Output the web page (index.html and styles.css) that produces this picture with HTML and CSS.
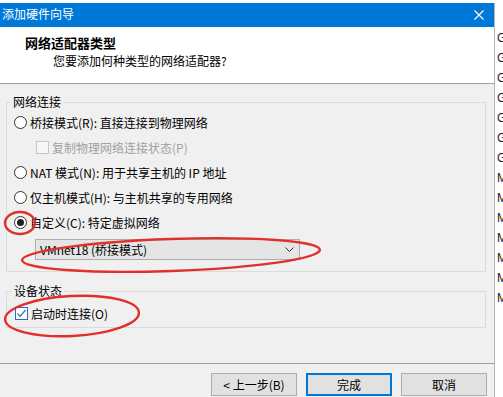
FILE: index.html
```html
<!doctype html>
<html lang="zh-CN">
<head>
  <meta charset="UTF-8">
  <title>添加硬件向导</title>
  <link rel="stylesheet" href="styles.css">
</head>
<body>
  <div class="screen">
    <div class="dialog">
      <div class="titlebar">
        <span>添加硬件向导</span>
        <svg class="close" width="10" height="10" viewBox="0 0 10 10">
          <path d="M0.5 0.5 L9.5 9.5 M9.5 0.5 L0.5 9.5" stroke="#fff" stroke-width="1.1" fill="none"/>
        </svg>
      </div>
      <div class="header">
        <div class="header-title">网络适配器类型</div>
        <div class="header-sub">您要添加何种类型的网络适配器?</div>
      </div>
      <div class="content">
        <fieldset class="group">
          <legend>网络连接</legend>
          <div class="opt"><span class="radio"></span>桥接模式(R): 直接连接到物理网络</div>
          <div class="opt sub disabled"><span class="check"></span>复制物理网络连接状态(P)</div>
          <div class="opt"><span class="radio"></span>NAT 模式(N): 用于共享主机的 IP 地址</div>
          <div class="opt"><span class="radio"></span>仅主机模式(H): 与主机共享的专用网络</div>
          <div class="opt"><span class="radio on"></span>自定义(C): 特定虚拟网络</div>
          <div class="select">
            <span>VMnet18 (桥接模式)</span>
            <svg width="9" height="5" viewBox="0 0 9 5">
              <path d="M0.5 0.5 L4.5 4.5 L8.5 0.5" stroke="#333" stroke-width="1" fill="none"/>
            </svg>
          </div>
        </fieldset>
        <fieldset class="group state">
          <legend>设备状态</legend>
          <div class="opt">
            <span class="check on">
              <svg width="11" height="11" viewBox="0 0 11 11">
                <path d="M1.5 5.5 L4.2 8.3 L9.5 2" stroke="#2c6cc0" stroke-width="1.2" fill="none"/>
              </svg>
            </span>启动时连接(O)
          </div>
        </fieldset>
      </div>
      <div class="footer">
        <button class="btn">&lt; 上一步(B)</button>
        <button class="btn default">完成</button>
        <button class="btn">取消</button>
      </div>
    </div>
    <div class="behind">
      <div>G</div><div>G</div><div>G</div><div>G</div><div>G</div><div>G</div><div>G</div>
      <div>M</div><div>M</div><div>M</div><div>M</div><div>M</div><div>M</div><div>M</div>
    </div>

    <!-- red marks drawn over the screenshot -->
    <svg class="marks" width="503" height="397" viewBox="0 0 503 397">
      <g stroke="#e0302c" stroke-width="2.4" fill="none">
        <ellipse cx="20" cy="223" rx="15" ry="11"/>
        <ellipse cx="171" cy="255" rx="149" ry="16" transform="rotate(-2 171 255)"/>
        <ellipse cx="72" cy="316" rx="67" ry="20" transform="rotate(-3 72 316)"/>
      </g>
    </svg>
  </div>
</body>
</html>
```

FILE: styles.css
```css
* {
  box-sizing: border-box;
}

body {
  margin: 0;
  background: #fff;
  font-family: "Noto Sans CJK SC", "Liberation Sans", sans-serif;
  font-size: 12px;
  color: #000;
  overflow: hidden;
}

.screen {
  display: flex;
  height: 397px;
  overflow: hidden;
  position: relative;
}

.dialog {
  width: 495px;
  flex: none;
  margin-top: 3px;
  background: #f0f0f0;
  border-right: 1px solid #b4b4b4;
}

.titlebar {
  height: 24px;
  background: #0078d7;
  color: #fff;
  display: flex;
  align-items: center;
  justify-content: space-between;
  padding: 0 10px 0 2px;
}

.titlebar span {
  line-height: 16px;
  margin-top: -2px;
}

.header {
  height: 57px;
  background: #fff;
  border-bottom: 1px solid #a0a0a0;
  padding: 8px 0 0 25px;
}

.header-title {
  font-size: 13px;
  font-weight: bold;
  line-height: 16px;
}

.header-sub {
  line-height: 16px;
  margin-top: 2px;
  padding-left: 28px;
}

.content {
  height: 279px;
  padding: 10px 8px 0 6px;
}

.group {
  margin: 0;
  padding: 0 0 11px 7px;
  border: 1px solid #dcdcdc;
  min-width: 0;
}

.group legend {
  padding: 0 2px;
  margin-left: -3px;
  line-height: 16px;
}

.group.state {
  margin-top: 11px;
  padding: 2px 0 1px 8px;
}

.opt {
  display: flex;
  align-items: center;
  gap: 3px;
  height: 25px;
  line-height: 16px;
}

.opt.sub {
  padding-left: 22px;
}

.opt.disabled {
  color: #a0a0a0;
}

.radio {
  width: 13px;
  height: 13px;
  border: 1px solid #333;
  border-radius: 50%;
  background: #fff;
  display: grid;
  place-items: center;
  flex: none;
}

.radio.on::after {
  content: "";
  width: 7px;
  height: 7px;
  border-radius: 50%;
  background: #222;
}

.check {
  width: 13px;
  height: 13px;
  border: 1px solid #333;
  background: #fff;
  display: grid;
  place-items: center;
  flex: none;
}

.disabled .check {
  border-color: #c6c6c6;
  background: #f7f7f7;
}

.check.on {
  border-color: #2c6cc0;
}

.select {
  margin: 4px 0 0 21px;
  width: 265px;
  height: 21px;
  background: #e5e5e5;
  border: 1px solid #adadad;
  display: flex;
  align-items: center;
  justify-content: space-between;
  padding: 0 5px 0 4px;
  line-height: 16px;
}

.footer {
  border-top: 1px solid #a0a0a0;
  padding: 9px 7px 0 0;
  display: flex;
  justify-content: flex-end;
  gap: 9px;
}

.btn {
  width: 86px;
  height: 23px;
  background: #e1e1e1;
  border: 1px solid #adadad;
  font-family: inherit;
  font-size: 12px;
  color: #000;
  padding: 0;
}

.btn.default {
  border-color: #0078d7;
  box-shadow: inset 0 0 0 1px #0078d7;
}

.behind {
  flex: 1;
  padding: 28px 0 0 2px;
  font-family: "Liberation Sans", sans-serif;
  font-size: 12px;
  line-height: 20px;
  color: #1a1a1a;
  white-space: nowrap;
}

.marks {
  position: absolute;
  left: 0;
  top: 0;
  pointer-events: none;
}
```
